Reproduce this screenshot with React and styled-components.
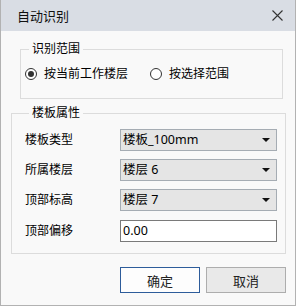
import styled, { createGlobalStyle } from "styled-components";

const GlobalStyle = createGlobalStyle`
  html, body {
    margin: 0;
    padding: 0;
    background: #ffffff;
  }
  * {
    box-sizing: border-box;
  }
`;

const Window = styled.div`
  width: 296px;
  height: 306px;
  display: flex;
  flex-direction: column;
  background: #f9f9f9;
  border: 1px solid #b2b2b2;
  border-top: none;
  font-family: "Noto Sans", "Noto Sans CJK SC", sans-serif;
  font-size: 12px;
  color: #000;
`;

const TitleBar = styled.div`
  height: 31px;
  flex: none;
  display: flex;
  align-items: center;
  justify-content: space-between;
  padding: 0 12px 0 16px;
  background: #d9dde4;
`;

const Title = styled.div`
  font-size: 13px;
  line-height: 16px;
  color: #111;
`;

const CloseButton = styled.div`
  width: 11px;
  height: 11px;
  display: flex;
  align-items: center;
  justify-content: center;
`;

const Group = styled.div`
  position: relative;
  flex: none;
  width: ${(p) => p.$width}px;
  height: ${(p) => p.$height}px;
  margin: ${(p) => p.$top}px 0 0 ${(p) => p.$left}px;
  border: 1px solid #dcdcdc;
`;

const Legend = styled.span`
  position: absolute;
  top: -8px;
  left: ${(p) => p.$left}px;
  padding: 0 3px;
  background: #f9f9f9;
  line-height: 14px;
`;

const RadioRow = styled.div`
  height: 100%;
  display: flex;
  align-items: center;
  padding-left: 4px;
`;

const RadioOption = styled.label`
  display: flex;
  align-items: center;
  gap: 7px;
  width: ${(p) => (p.$width ? `${p.$width}px` : "auto")};
  line-height: 14px;
`;

const RadioCircle = styled.span`
  width: 12px;
  height: 12px;
  border-radius: 50%;
  border: 1px solid #333;
  background: #fff;
  display: flex;
  align-items: center;
  justify-content: center;

  &::after {
    content: "";
    width: 6px;
    height: 6px;
    border-radius: 50%;
    background: ${(p) => (p.$checked ? "#333" : "transparent")};
  }
`;

const Fields = styled.div`
  display: flex;
  flex-direction: column;
  gap: 8px;
  padding: 15px 8px 0 13px;
`;

const FieldRow = styled.div`
  display: flex;
  align-items: center;
  margin-top: ${(p) => p.$shift || 0}px;
`;

const FieldLabel = styled.div`
  width: 95px;
  line-height: 14px;
`;

const Select = styled.div`
  width: 157px;
  height: 22px;
  display: flex;
  align-items: center;
  justify-content: space-between;
  padding: 0 6px 0 2px;
  background: #e5e5e5;
  border: 1px solid #a5acb3;
  line-height: 14px;
  font-size: 12.5px;
`;

const Arrow = styled.span`
  width: 0;
  height: 0;
  border-left: 4px solid transparent;
  border-right: 4px solid transparent;
  border-top: 4px solid #111;
`;

const TextInput = styled.div`
  width: 157px;
  height: 22px;
  display: flex;
  align-items: center;
  padding: 0 2px;
  background: #fff;
  border: 1px solid #7a7a7a;
  font-size: 12.5px;
  line-height: 14px;
`;

const ButtonBar = styled.div`
  display: flex;
  justify-content: flex-end;
  gap: 6px;
  margin-top: 13px;
  padding-right: 9px;
`;

const Button = styled.div`
  width: 80px;
  height: 26px;
  display: flex;
  align-items: center;
  justify-content: center;
  font-size: 13px;
  color: #222;
  background: ${(p) => (p.$primary ? "#fdfdfd" : "#e9e9e9")};
  border: 1px solid ${(p) => (p.$primary ? "#2d5c9a" : "#adadad")};
`;

const fields = [
  { label: "楼板类型", value: "楼板_100mm" },
  { label: "所属楼层", value: "楼层 6" },
  { label: "顶部标高", value: "楼层 7" },
];

export default function App() {
  return (
    <>
      <GlobalStyle />
      <Window>
        <TitleBar>
          <Title>自动识别</Title>
          <CloseButton>
            <svg width="11" height="11" viewBox="0 0 11 11">
              <path d="M0.5 0.5L10.5 10.5M10.5 0.5L0.5 10.5" stroke="#333" strokeWidth="1.1" />
            </svg>
          </CloseButton>
        </TitleBar>

        <Group $width={263} $height={50} $top={18} $left={19}>
          <Legend $left={8}>识别范围</Legend>
          <RadioRow>
            <RadioOption $width={125}>
              <RadioCircle $checked />
              按当前工作楼层
            </RadioOption>
            <RadioOption>
              <RadioCircle />
              按选择范围
            </RadioOption>
          </RadioRow>
        </Group>

        <Group $width={275} $height={141} $top={14} $left={10}>
          <Legend $left={17}>楼板属性</Legend>
          <Fields>
            {fields.map((f) => (
              <FieldRow key={f.label}>
                <FieldLabel>{f.label}</FieldLabel>
                <Select>
                  {f.value}
                  <Arrow />
                </Select>
              </FieldRow>
            ))}
            <FieldRow $shift={1}>
              <FieldLabel>顶部偏移</FieldLabel>
              <TextInput>0.00</TextInput>
            </FieldRow>
          </Fields>
        </Group>

        <ButtonBar>
          <Button $primary>确定</Button>
          <Button>取消</Button>
        </ButtonBar>
      </Window>
    </>
  );
}
